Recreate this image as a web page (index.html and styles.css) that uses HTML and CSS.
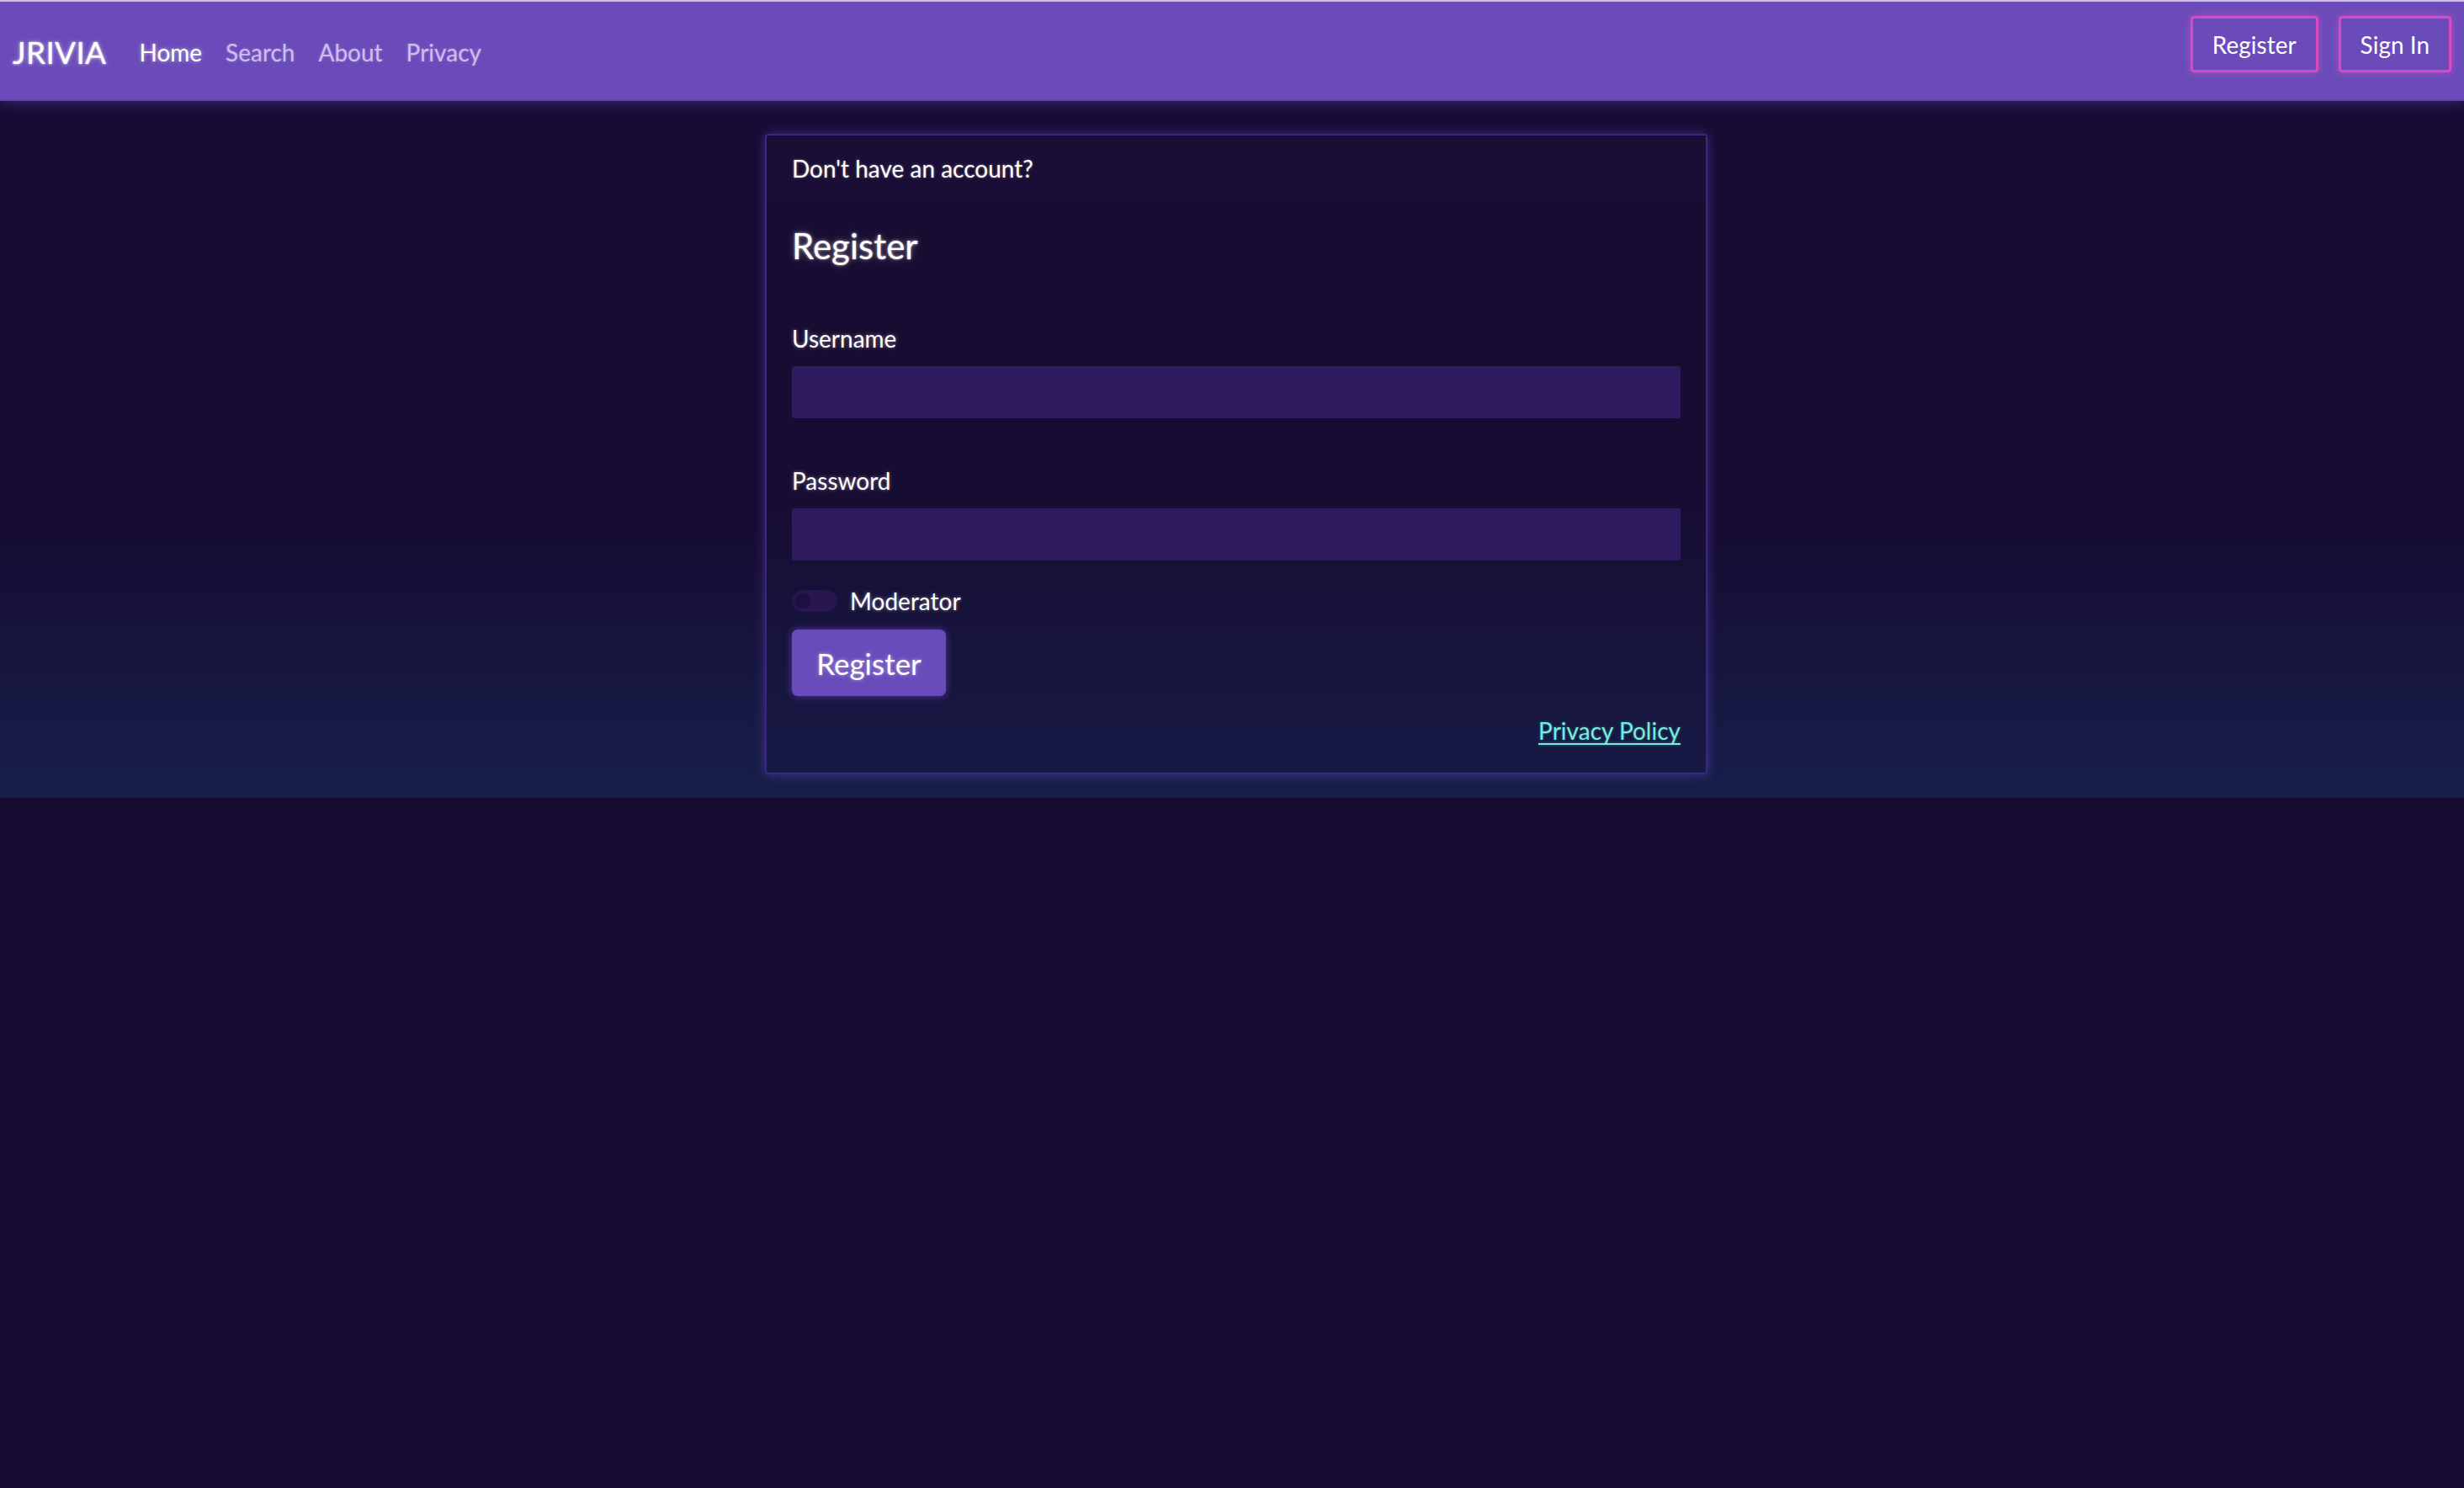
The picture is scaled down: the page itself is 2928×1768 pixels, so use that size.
FILE: index.html
```html
<!DOCTYPE html>
<html lang="en">
<head>
<meta charset="utf-8">
<title>JRIVIA - Register</title>
<link rel="stylesheet" href="styles.css">
</head>
<body>
<nav class="navbar">
  <div class="nav-left">
    <a class="brand" href="#">JRIVIA</a>
    <ul class="nav-links">
      <li><a class="nav-link active" href="#">Home</a></li>
      <li><a class="nav-link" href="#">Search</a></li>
      <li><a class="nav-link" href="#">About</a></li>
      <li><a class="nav-link" href="#">Privacy</a></li>
    </ul>
  </div>
  <div class="nav-right">
    <a class="nav-btn" href="#">Register</a>
    <a class="nav-btn" href="#">Sign In</a>
  </div>
</nav>
<main class="main">
  <div class="card">
    <div class="card-header">Don't have an account?</div>
    <div class="card-body">
      <h2 class="card-title">Register</h2>
      <div class="field">
        <label class="field-label" for="u">Username</label>
        <input class="field-input" id="u" type="text">
      </div>
      <div class="field">
        <label class="field-label" for="p">Password</label>
        <input class="field-input" id="p" type="password">
      </div>
      <div class="switch-row">
        <span class="switch"><span class="knob"></span></span>
        <span class="switch-label">Moderator</span>
      </div>
      <button class="btn-primary" type="button">Register</button>
      <div class="card-footer-row">
        <a class="privacy-link" href="#">Privacy Policy</a>
      </div>
    </div>
  </div>
</main>
</body>
</html>
```

FILE: styles.css
```css
html {
  background: #160a30;
  margin: 0;
}
body {
  margin: 0;
  font-family: Lato, "Open Sans", sans-serif;
  color: #ffffff;
  background: linear-gradient(to bottom, #160c33 0%, #160c33 66%, #171f4b 100%);
}
a { text-decoration: none; color: inherit; }

.navbar {
  height: 120px;
  box-sizing: border-box;
  border-top: 2px solid #c9c1dc;
  border-bottom: 2px solid #5d42ad;
  background: #6b4bba;
  display: flex;
  align-items: center;
  justify-content: space-between;
  padding: 0 15px 0 15px;
  box-shadow: 0 4px 14px rgba(90, 60, 170, 0.45);
  position: relative;
}
.nav-left {
  display: flex;
  align-items: center;
  padding-top: 3px;
}
.brand {
  font-size: 37px;
  font-weight: 400;
  color: #ffffff;
  letter-spacing: 0.3px;
  text-shadow: 0 0 3px rgba(255,255,255,0.8), 0 0 6px rgba(255,255,255,0.35);
  margin-right: 39px;
}
.nav-links {
  list-style: none;
  margin: 0;
  padding: 0;
  display: flex;
  gap: 28px;
}
.nav-link {
  font-size: 28px;
  color: #cdbdf0;
  text-shadow: 0 0 3px rgba(255,255,255,0.3);
}
.nav-link.active {
  color: #ffffff;
  text-shadow: 0 0 4px rgba(255,255,255,0.6);
}
.nav-right {
  display: flex;
  gap: 24px;
  margin-top: -15px;
}
.nav-btn {
  display: flex;
  align-items: center;
  justify-content: center;
  height: 67px;
  box-sizing: border-box;
  padding: 0 23px;
  font-size: 28px;
  color: #ffffff;
  border: 3px solid #d64bc1;
  border-radius: 4px;
  box-shadow: 0 0 8px rgba(230, 80, 200, 0.6);
}

.main {
  display: flex;
  justify-content: center;
  padding: 39px 0 28px;
}
.card {
  width: 1120px;
  box-sizing: border-box;
  border: 2px solid #3a2880;
  border-radius: 4px;
  background: linear-gradient(to bottom, #170c32 0%, #170c32 55%, #171a45 100%);
  box-shadow: 0 0 14px rgba(120, 80, 220, 0.45);
  margin-left: 10px;
}
.card-header {
  height: 78px;
  box-sizing: border-box;
  padding: 0 30px;
  display: flex;
  align-items: center;
  font-size: 28px;
  background: #1a0e36;
  border-bottom: 1px solid #1c1038;
  text-shadow: 0 0 3px rgba(255,255,255,0.45);
}
.card-body {
  padding: 26px 30px 33px;
}
.card-title {
  margin: 0 0 64px;
  font-size: 42px;
  font-weight: 400;
  line-height: 1.3;
  text-shadow: 0 0 3px rgba(255,255,255,0.7), 0 0 8px rgba(255,255,255,0.35);
}
.field + .field {
  margin-top: 56px;
}
.field-label {
  display: block;
  font-size: 28px;
  line-height: 1.3;
  margin-bottom: 15px;
  text-shadow: 0 0 4px rgba(255,255,255,0.45);
}
.field-input {
  display: block;
  width: 100%;
  height: 62px;
  box-sizing: border-box;
  border: none;
  border-radius: 3px;
  background: #2e1a5e;
  color: #fff;
  font-size: 28px;
  padding: 0 20px;
  outline: none;
}
.switch-row {
  display: flex;
  align-items: center;
  margin-top: 31px;
  gap: 15px;
}
.switch {
  width: 54px;
  height: 26px;
  border-radius: 13px;
  background: #281650;
  display: flex;
  align-items: center;
  padding: 0 4px;
  box-sizing: border-box;
}
.knob {
  width: 18px;
  height: 18px;
  border-radius: 50%;
  background: #1d1040;
}
.switch-label {
  font-size: 28px;
  text-shadow: 0 0 4px rgba(255,255,255,0.45);
}
.btn-primary {
  display: block;
  margin-top: 17px;
  width: 183px;
  height: 79px;
  border: none;
  border-radius: 7px;
  background: #6a4bbb;
  color: #fff;
  font-family: Lato, "Open Sans", sans-serif;
  font-size: 35px;
  text-shadow: 0 0 4px rgba(255,255,255,0.5);
  box-shadow: 0 0 10px rgba(130, 90, 230, 0.55);
}
.card-footer-row {
  display: flex;
  justify-content: flex-end;
  margin-top: 24px;
}
.privacy-link {
  font-size: 28px;
  color: #75ecdc;
  text-decoration: underline;
  text-underline-offset: 4px;
  text-shadow: 0 0 3px rgba(110, 232, 216, 0.4);
}
```
